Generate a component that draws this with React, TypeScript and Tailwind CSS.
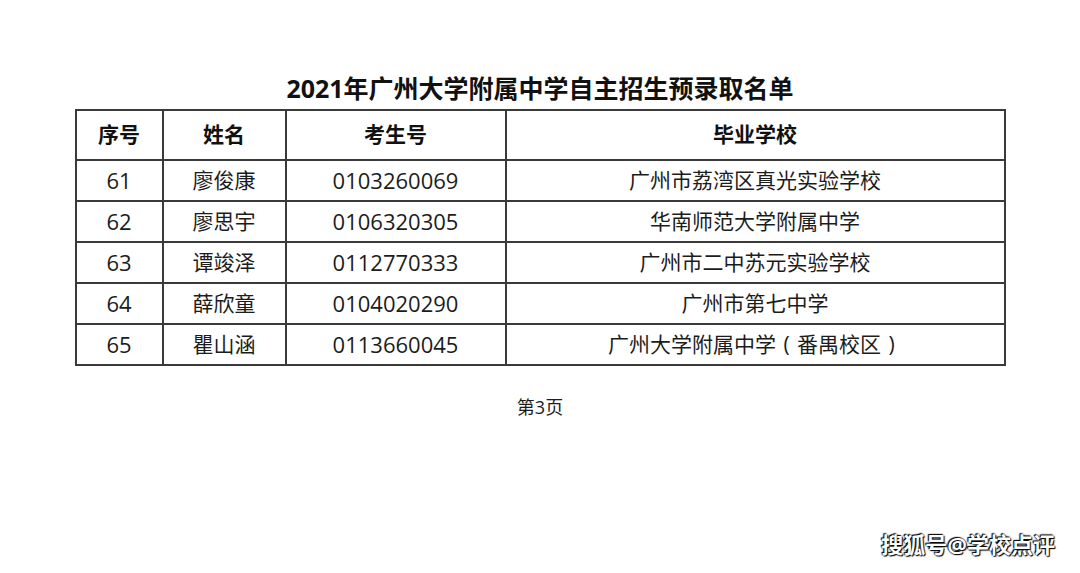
import type { ReactNode } from "react";

const P = ({ c }: { c: string }) => (
  <span className="inline-block w-[1em] text-center">{c}</span>
);

const rows: { no: string; name: string; id: string; school: ReactNode }[] = [
  { no: "61", name: "廖俊康", id: "0103260069", school: "广州市荔湾区真光实验学校" },
  { no: "62", name: "廖思宇", id: "0106320305", school: "华南师范大学附属中学" },
  { no: "63", name: "谭竣泽", id: "0112770333", school: "广州市二中苏元实验学校" },
  { no: "64", name: "薛欣童", id: "0104020290", school: "广州市第七中学" },
  {
    no: "65",
    name: "瞿山涵",
    id: "0113660045",
    school: (
      <>
        广州大学附属中学<P c="(" />番禺校区<P c=")" />
      </>
    ),
  },
];

const font = "font-['Open_Sans','Noto_Sans_CJK_SC',sans-serif]";
const cell = "border-2 border-[#3a3a3a] text-center";

export default function App() {
  return (
    <div className={`relative w-[1080px] h-[573px] bg-white text-[#1c1c1c] ${font}`}>
      <div className="pt-[73px] flex flex-col items-center">
        <h1 className="h-[30px] leading-[30px] text-[25px] font-bold text-[#111] mb-[6px]">
          2021年广州大学附属中学自主招生预录取名单
        </h1>

        <table className="w-[929px] border-collapse table-fixed">
          <colgroup>
            <col className="w-[87px]" />
            <col className="w-[123px]" />
            <col className="w-[220px]" />
            <col className="w-[499px]" />
          </colgroup>
          <thead>
            <tr className="h-[50px] text-[21px] font-bold text-[#111]">
              <th className={cell}>序号</th>
              <th className={cell}>姓名</th>
              <th className={cell}>考生号</th>
              <th className={cell}>毕业学校</th>
            </tr>
          </thead>
          <tbody>
            {rows.map((r) => (
              <tr key={r.no} className="h-[41px] text-[21px]">
                <td className={`${cell} text-[22px]`}>{r.no}</td>
                <td className={cell}>{r.name}</td>
                <td className={`${cell} text-[22px]`}>{r.id}</td>
                <td className={cell}>{r.school}</td>
              </tr>
            ))}
          </tbody>
        </table>

        <p className="mt-[29px] text-[18px] leading-[24px]">第3页</p>
      </div>

      {/* watermark */}
      <div className="absolute right-[25px] bottom-[12px] text-[22px] font-bold text-white [text-shadow:0_0_2px_#000,1px_1px_1px_#000,-1px_-1px_1px_#000]">
        搜狐号@学校点评
      </div>
    </div>
  );
}
